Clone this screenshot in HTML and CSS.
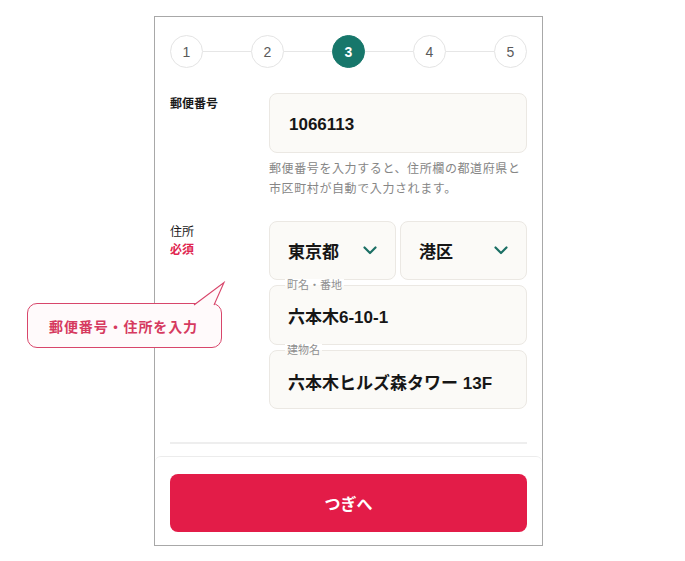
FILE: index.html
```html
<!DOCTYPE html>
<html lang="ja">
<head>
<meta charset="utf-8">
<link rel="stylesheet" href="styles.css">
</head>
<body>
<div class="frame">
  <div class="content">
    <div class="stepper">
      <span class="step">1</span><span class="bar"></span>
      <span class="step">2</span><span class="bar"></span>
      <span class="step active">3</span><span class="bar"></span>
      <span class="step">4</span><span class="bar"></span>
      <span class="step">5</span>
    </div>

    <div class="row row-zip">
      <div class="label"><span class="label-main bold">郵便番号</span></div>
      <div class="field">
        <div class="box box-zip"><span class="value">1066113</span></div>
        <p class="help">郵便番号を入力すると、住所欄の都道府県と<br>市区町村が自動で入力されます。</p>
      </div>
    </div>

    <div class="row row-addr">
      <div class="label">
        <span class="label-main">住所</span>
        <span class="required">必須</span>
      </div>
      <div class="field fields">
        <div class="selects">
          <div class="box select select-pref"><span class="value">東京都</span>
            <svg class="chev" width="14" height="9" viewBox="0 0 14 9"><path d="M1.5 1.5 L7 7 L12.5 1.5" fill="none" stroke="#1b6f64" stroke-width="2.2" stroke-linecap="round" stroke-linejoin="round"/></svg>
          </div>
          <div class="box select select-city"><span class="value">港区</span>
            <svg class="chev" width="14" height="9" viewBox="0 0 14 9"><path d="M1.5 1.5 L7 7 L12.5 1.5" fill="none" stroke="#1b6f64" stroke-width="2.2" stroke-linecap="round" stroke-linejoin="round"/></svg>
          </div>
        </div>
        <div class="box labeled"><span class="float">町名・番地</span><span class="value">六本木6-10-1</span></div>
        <div class="box labeled"><span class="float">建物名</span><span class="value">六本木ヒルズ森タワー 13F</span></div>
      </div>
    </div>

    <div class="divider"></div>
  </div>
  <div class="footer">
    <button class="next">つぎへ</button>
  </div>
</div>

<div class="tip">
  <span class="tip-text">郵便番号・住所を入力</span>
  <svg class="tail" width="34" height="26" viewBox="0 0 34 26"><path d="M1 24 L31 1.5 L21 24" fill="#fffafb" stroke="#d8466b" stroke-width="1.1" stroke-linejoin="miter"/></svg>
</div>
</body>
</html>
```

FILE: styles.css
```css
* { box-sizing: border-box; }
html, body { margin: 0; padding: 0; background: #fff; }
body {
  width: 685px;
  height: 561px;
  position: relative;
  font-family: "Liberation Sans", "Noto Sans CJK JP", sans-serif;
  color: #1a1a1a;
  padding-top: 16px;
  padding-left: 154px;
}
.frame {
  width: 389px;
  height: 530px;
  border: 1px solid #a8a8a8;
  display: flex;
  flex-direction: column;
}
.content {
  padding: 18px 15px 0 15px;
  flex: 1;
}
.stepper {
  display: flex;
  align-items: center;
  height: 33px;
}
.step {
  width: 33px;
  height: 33px;
  border-radius: 50%;
  border: 1px solid #e4e4e4;
  display: flex;
  align-items: center;
  justify-content: center;
  font-size: 14px;
  color: #5a5a5a;
  flex: none;
}
.step.active {
  background: #17776b;
  border-color: #17776b;
  color: #fff;
  font-weight: bold;
}
.bar {
  flex: 1;
  height: 1px;
  background: #e6e6e6;
}
.row {
  display: flex;
}
.row-zip { margin-top: 25px; }
.row-addr { margin-top: 22px; }
.label {
  width: 99px;
  flex: none;
  display: flex;
  flex-direction: column;
  padding-top: 2px;
  font-size: 12px;
  line-height: 18px;
}
.bold { font-weight: bold; }
.required { color: #e0264f; font-weight: bold; }
.field { flex: 1; min-width: 0; }
.box {
  background: #fbfaf7;
  border: 1px solid #ebe8e3;
  border-radius: 8px;
  display: flex;
  align-items: center;
  padding: 0 18px;
}
.value {
  font-size: 17px;
  font-weight: bold;
  color: #161616;
}
.box-zip { height: 60px; padding-left: 19px; padding-top: 4px; }
.help {
  margin: 6px 0 0;
  font-size: 12px;
  line-height: 20px;
  letter-spacing: 0.6px;
  white-space: nowrap;
  color: #868686;
}
.fields {
  display: flex;
  flex-direction: column;
  gap: 5px;
}
.selects {
  display: flex;
  gap: 4px;
}
.select {
  height: 59px;
  justify-content: space-between;
}
.select-pref { width: 127px; }
.select-city { flex: 1; }
.chev { display: block; }
.labeled {
  position: relative;
  height: 60px;
  padding-top: 0;
}
.labeled + .labeled { height: 59px; padding-top: 3px; }
.float {
  position: absolute;
  left: 15px;
  top: -7px;
  padding: 0 2px;
  font-size: 11px;
  line-height: 13px;
  color: #8f8f8f;
  background: linear-gradient(#fff 0 50%, #fbfaf7 50% 100%);
}
.divider {
  margin-top: 33px;
  height: 2px;
  background: #eeeeee;
}
.footer {
  border-top: 1px solid #ececec;
  border-radius: 6px 6px 0 0;
  padding: 17px 15px 13px 15px;
}
.next {
  display: block;
  width: 100%;
  height: 58px;
  border: none;
  border-radius: 8px;
  background: #e31c48;
  color: #fff;
  font-family: "Liberation Sans", "Noto Sans CJK JP", sans-serif;
  font-size: 16px;
  font-weight: bold;
}
.tip {
  position: absolute;
  left: 27px;
  top: 303px;
  width: 195px;
  height: 45px;
  background: #fffafb;
  border: 1px solid #d8466b;
  border-radius: 10px;
  display: flex;
  align-items: center;
  justify-content: center;
}
.tip-text {
  font-size: 14px;
  font-weight: bold;
  letter-spacing: 0.9px;
  color: #d63a60;
  padding-right: 2px;
}
.tail {
  position: absolute;
  left: 165px;
  top: -23px;
  display: block;
}
```
